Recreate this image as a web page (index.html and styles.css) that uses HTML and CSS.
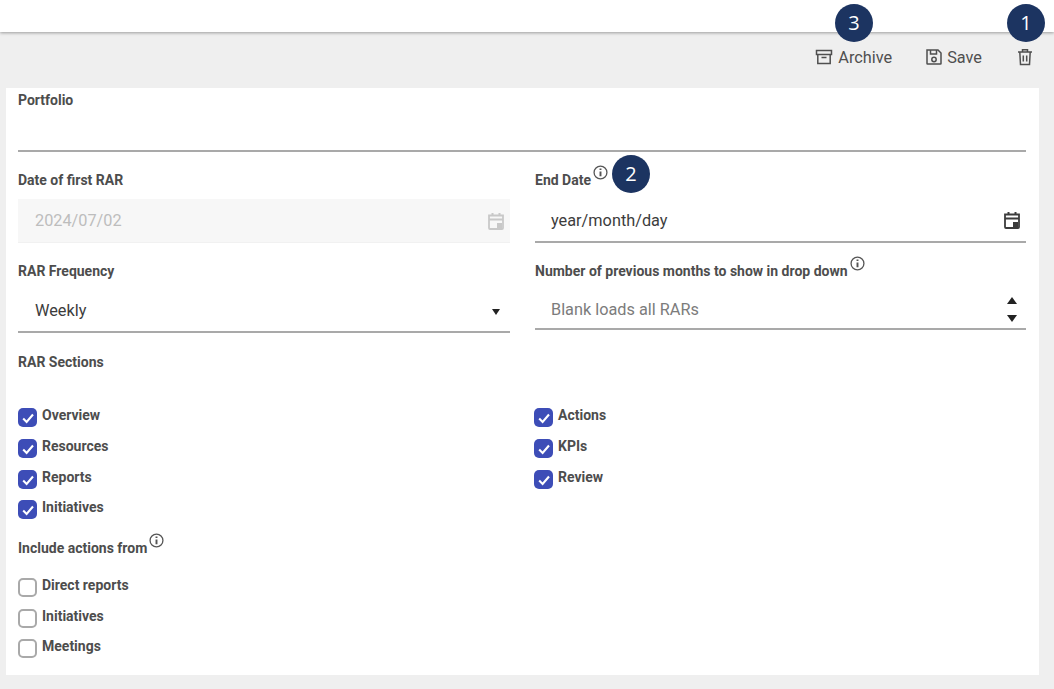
FILE: index.html
```html
<!DOCTYPE html>
<html lang="en">
<head>
<meta charset="utf-8">
<title>Portfolio settings</title>
<link rel="stylesheet" href="styles.css">
</head>
<body>
<svg class="sprite" width="0" height="0">
  <symbol id="cal" viewBox="0 0 18 18">
    <path d="M2 3.500h14v12.500a1 1 0 0 1-1 1H3a1 1 0 0 1-1-1z M2 7.500h14" fill="none" stroke="currentColor" stroke-width="1.800"/>
    <path d="M5.500 1v3M12.500 1v3" stroke="currentColor" stroke-width="2"/>
    <rect x="10" y="11" width="5" height="5" fill="currentColor"/>
  </symbol>
  <symbol id="info" viewBox="0 0 14 14">
    <circle cx="7" cy="7" r="6" fill="none" stroke="currentColor" stroke-width="1.200"/>
    <path d="M7 6v4.500M7 3.200v1.500" stroke="currentColor" stroke-width="1.800"/>
  </symbol>
  <symbol id="tick" viewBox="0 0 18 18">
    <path d="M4.200 9.500l3.400 3.400 6.400-7.400" fill="none" stroke="#fff" stroke-width="2.100"/>
  </symbol>
</svg>

<header class="topbar"></header>

<div class="toolbar">
  <button class="tool archive">
    <svg width="18" height="18" viewBox="0 0 18 18"><path d="M1.500 2.500h15v4h-15z M2.800 6.500v9h12.400v-9 M6.500 9.500h5" fill="none" stroke="currentColor" stroke-width="1.500"/></svg>
    Archive
  </button>
  <button class="tool save">
    <svg width="18" height="18" viewBox="0 0 18 18"><path d="M2 2h11l3 3v10.500a.5.500 0 0 1-.5.500h-13a.5.500 0 0 1-.5-.5z" fill="none" stroke="currentColor" stroke-width="1.500"/><path d="M5.500 2v4h6V2" fill="none" stroke="currentColor" stroke-width="1.500"/><circle cx="9" cy="11.500" r="2.200" fill="none" stroke="currentColor" stroke-width="1.500"/></svg>
    Save
  </button>
  <button class="tool trash" aria-label="Delete">
    <svg width="18" height="18" viewBox="0 0 18 18"><path d="M2 4h14M6.500 4V1.800h5V4M3.800 4l.7 12.500h9l.7-12.500M7.300 7.500v6M10.700 7.500v6" fill="none" stroke="currentColor" stroke-width="1.500"/></svg>
  </button>
</div>

<span class="badge badge-archive">3</span>
<span class="badge badge-trash">1</span>
<span class="badge badge-end">2</span>

<main class="card">
  <div class="field portfolio">
    <div class="label">Portfolio</div>
    <div class="control"></div>
  </div>

  <div class="columns first">
    <div class="field">
      <div class="label">Date of first RAR</div>
      <div class="control disabled"><span>2024/07/02</span><svg class="cal" width="18" height="18"><use href="#cal"/></svg></div>
    </div>
    <div class="field">
      <div class="label">End Date<svg class="info" width="15" height="15"><use href="#info"/></svg></div>
      <div class="control"><span>year/month/day</span><svg class="cal" width="18" height="18"><use href="#cal"/></svg></div>
    </div>
  </div>

  <div class="columns second">
    <div class="field">
      <div class="label">RAR Frequency</div>
      <div class="control select"><span>Weekly</span><i class="caret"></i></div>
    </div>
    <div class="field">
      <div class="label">Number of previous months to show in drop down<svg class="info" width="15" height="15"><use href="#info"/></svg></div>
      <div class="control number">
        <span class="placeholder">Blank loads all RARs</span>
        <span class="spin"><i class="up"></i><i class="down"></i></span>
      </div>
    </div>
  </div>

  <div class="label sections">RAR Sections</div>
  <div class="columns checks">
    <div class="stack left">
      <label class="check"><i class="box on"><svg width="18" height="18"><use href="#tick"/></svg></i>Overview</label>
      <label class="check"><i class="box on"><svg width="18" height="18"><use href="#tick"/></svg></i>Resources</label>
      <label class="check"><i class="box on"><svg width="18" height="18"><use href="#tick"/></svg></i>Reports</label>
      <label class="check"><i class="box on"><svg width="18" height="18"><use href="#tick"/></svg></i>Initiatives</label>
    </div>
    <div class="stack right">
      <label class="check"><i class="box on"><svg width="18" height="18"><use href="#tick"/></svg></i>Actions</label>
      <label class="check"><i class="box on"><svg width="18" height="18"><use href="#tick"/></svg></i>KPIs</label>
      <label class="check"><i class="box on"><svg width="18" height="18"><use href="#tick"/></svg></i>Review</label>
    </div>
  </div>

  <div class="label include">Include actions from<svg class="info" width="15" height="15"><use href="#info"/></svg></div>
  <div class="stack actions">
    <label class="check"><i class="box"></i>Direct reports</label>
    <label class="check"><i class="box"></i>Initiatives</label>
    <label class="check"><i class="box"></i>Meetings</label>
  </div>
</main>
</body>
</html>
```

FILE: styles.css
```css
* { box-sizing: border-box; }
html, body { margin: 0; height: 689px; overflow: hidden; }
body {
  position: relative;
  background: #efefef;
  font-family: Roboto, "Liberation Sans", sans-serif;
  color: #4a4a4a;
}
.sprite { position: absolute; }

.topbar {
  height: 32px;
  background: #fff;
  box-shadow: 0 1px 3px rgba(0, 0, 0, .35);
}

.toolbar {
  height: 56px;
  display: flex;
  justify-content: flex-end;
  align-items: center;
  padding: 0 20px 6px 0;
}
.tool {
  display: flex;
  align-items: center;
  gap: 5px;
  padding: 0;
  border: 0;
  background: none;
  font: 400 16.300px Roboto, "Liberation Sans", sans-serif;
  color: #4f4f4f;
}
.archive { margin-right: 33px; }
.save { gap: 4px; margin-right: 34px; }

.badge {
  position: absolute;
  width: 38px;
  height: 38px;
  border-radius: 50%;
  background: #1c3461;
  color: #fff;
  font: 400 20px/38px "Open Sans", sans-serif;
  text-align: center;
}
.badge-archive { left: 835px; top: 4px; }
.badge-trash { left: 1007px; top: 4px; }
.badge-end { left: 612px; top: 155px; }

.card {
  margin: 0 15px 0 6px;
  height: 587px;
  padding: 4px 13px 0 12px;
  background: #fff;
}

.label {
  height: 16px;
  font-size: 14px;
  line-height: 16px;
  font-weight: 700;
  white-space: nowrap;
  color: #4d4d4d;
}
.info {
  position: relative;
  top: -9px;
  margin-left: 2px;
  vertical-align: middle;
  color: #555;
}

.control {
  height: 44px;
  display: flex;
  align-items: center;
  justify-content: space-between;
  padding: 0 13px 0 17px;
  border-bottom: 2px solid #a9a9a9;
  font-size: 16.300px;
  color: #3c3c3c;
}

.columns {
  display: grid;
  grid-template-columns: 492px 491px;
  column-gap: 25px;
}
.columns > .field:last-child .control { padding-left: 16px; }
.first { margin-top: 20px; }
.first .control { margin-top: 11px; }
.second { margin-top: 20px; }
.second .control { margin-top: 10px; }
.second .number { height: 41px; padding-top: 2px; }

.disabled {
  background: #f7f7f7;
  border-bottom: 1px solid #f1f1f1;
  color: #bdbdbd;
}
.cal { margin-right: -8px; color: #3c3c3c; }
.disabled .cal { color: #c8c8c8; }

.caret {
  width: 0;
  height: 0;
  margin: 4px -3px 0 0;
  border: 4.500px solid transparent;
  border-top: 6px solid #222;
  border-bottom: 0;
}
.placeholder { color: #7c7c7c; }
.spin { display: flex; flex-direction: column; gap: 11px; margin-right: -4px; }
.up, .down { width: 0; height: 0; border: 5.500px solid transparent; }
.up { border-bottom: 7px solid #222; border-top: 0; }
.down { border-top: 7px solid #222; border-bottom: 0; }

.sections { margin-top: 21px; }
.checks { margin-top: 37px; }
.stack { display: flex; flex-direction: column; gap: 10px; }
.right { margin-left: -1px; }
.left .check:last-child, .actions .check:last-child { margin-top: -1px; }
.check {
  display: flex;
  align-items: flex-start;
  gap: 5px;
  height: 21px;
  font-size: 14px;
  line-height: 16px;
  font-weight: 700;
  white-space: nowrap;
  color: #4d4d4d;
}
.box {
  flex: none;
  width: 19px;
  height: 19px;
  margin-top: 1px;
  border: 2px solid #a9a9a9;
  border-radius: 5px;
  background: #fff;
}
.box.on {
  border: 0;
  background: #3d4db7;
}
.box svg { display: block; margin: .5px; }

.include { margin-top: 20px; }
.actions { margin-top: 21px; }
```
